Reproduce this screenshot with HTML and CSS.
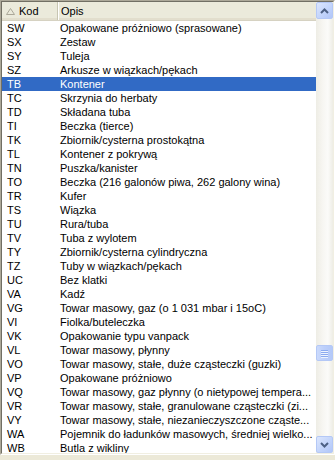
FILE: index.html
```html
<!DOCTYPE html>
<html lang="pl">
<head>
    <meta charset="utf-8">
    <title>Kody opakowań</title>
    <link rel="stylesheet" href="styles.css">
</head>
<body>
<div class="frame">
    <div class="listview">
        <div class="main">
            <div class="header">
                <div class="col-head kod">
                    <svg class="sort" width="9" height="7" viewBox="0 0 9 7"><path d="M0.5 6.5 L4.5 0.5 L8.5 6.5 Z" fill="none" stroke="#aca899" stroke-width="1"/></svg>
                    Kod
                </div>
                <div class="col-head opis">Opis</div>
                <div class="col-head rest"></div>
            </div>
            <div class="rows" id="rows"></div>
        </div>
        <div class="scrollbar">
            <div class="arrow up">
                <svg width="9" height="6" viewBox="0 0 9 6"><path d="M1 5 L4.5 1.5 L8 5" fill="none" stroke="#4d6185" stroke-width="2"/></svg>
            </div>
            <div class="track">
                <div class="thumb">
                    <span></span><span></span><span></span><span></span>
                </div>
            </div>
            <div class="arrow down">
                <svg width="9" height="6" viewBox="0 0 9 6"><path d="M1 1 L4.5 4.5 L8 1" fill="none" stroke="#4d6185" stroke-width="2"/></svg>
            </div>
        </div>
    </div>
</div>
<script>
    const items = [
        ["SW", "Opakowane próżniowo (sprasowane)"],
        ["SX", "Zestaw"],
        ["SY", "Tuleja"],
        ["SZ", "Arkusze w wiązkach/pękach"],
        ["TB", "Kontener"],
        ["TC", "Skrzynia do herbaty"],
        ["TD", "Składana tuba"],
        ["TI", "Beczka (tierce)"],
        ["TK", "Zbiornik/cysterna prostokątna"],
        ["TL", "Kontener z pokrywą"],
        ["TN", "Puszka/kanister"],
        ["TO", "Beczka (216 galonów piwa, 262 galony wina)"],
        ["TR", "Kufer"],
        ["TS", "Wiązka"],
        ["TU", "Rura/tuba"],
        ["TV", "Tuba z wylotem"],
        ["TY", "Zbiornik/cysterna cylindryczna"],
        ["TZ", "Tuby w wiązkach/pękach"],
        ["UC", "Bez klatki"],
        ["VA", "Kadź"],
        ["VG", "Towar masowy, gaz (o 1 031 mbar i 15oC)"],
        ["VI", "Fiolka/buteleczka"],
        ["VK", "Opakowanie typu vanpack"],
        ["VL", "Towar masowy, płynny"],
        ["VO", "Towar masowy, stałe, duże cząsteczki (guzki)"],
        ["VP", "Opakowane próżniowo"],
        ["VQ", "Towar masowy, gaz płynny (o nietypowej tempera..."],
        ["VR", "Towar masowy, stałe, granulowane cząsteczki (zi..."],
        ["VY", "Towar masowy, stałe, niezanieczyszczone cząste..."],
        ["WA", "Pojemnik do ładunków masowych, średniej wielko..."],
        ["WB", "Butla z wikliny"]
    ];

    let rows = document.getElementById("rows");
    items.forEach(item => {
        let row = document.createElement("div");
        row.className = "row" + (item[0] == "TB" ? " selected" : "");
        row.innerHTML = `<div class="cell kod">${item[0]}</div><div class="cell opis">${item[1]}</div>`;
        rows.appendChild(row);
    });
</script>
</body>
</html>
```

FILE: styles.css
```css
html, body {
    margin: 0;
    padding: 0;
    background: #ece9d8;
}

body {
    width: 335px;
    height: 460px;
    overflow: hidden;
    font-family: "Liberation Sans", Arial, sans-serif;
    font-size: 11px;
    color: #000;
}

.frame {
    height: 455px;
    box-sizing: border-box;
    border-top: 1px solid #aca899;
    border-left: 1px solid #aca899;
    border-right: 1px solid #fff;
    border-bottom: 1px solid #fff;
}

.listview {
    height: 100%;
    box-sizing: border-box;
    border-top: 1px solid #716f64;
    border-left: 1px solid #716f64;
    border-right: 1px solid #f1efe2;
    border-bottom: 1px solid #f1efe2;
    background: #fff;
    display: flex;
    overflow: hidden;
}

.main {
    flex: 1;
    min-width: 0;
    display: flex;
    flex-direction: column;
}

.header {
    height: 19px;
    flex: none;
    display: flex;
    background: #ebeadb;
    box-sizing: border-box;
    border-bottom: 1px solid #d6d2c2;
    box-shadow: inset 0 -2px 0 #e2decd;
}

.col-head {
    display: flex;
    align-items: center;
    box-sizing: border-box;
    height: 100%;
    white-space: nowrap;
}

.col-head.kod {
    width: 56px;
    border-right: 1px solid #c7c5b2;
    box-shadow: 1px 0 0 #fff;
    padding-left: 4px;
}

.sort {
    margin-right: 4px;
}

.col-head.opis {
    padding-left: 3px;
    width: 250px;
}

.rows {
    flex: 1;
    overflow: hidden;
}

.row {
    height: 14px;
    display: flex;
    align-items: center;
    white-space: nowrap;
}

.row.selected {
    background: #316ac5;
    color: #fff;
}

.cell.kod {
    width: 56px;
    padding-left: 5px;
    box-sizing: border-box;
}

.cell.opis {
    padding-left: 2px;
}

.scrollbar {
    width: 17px;
    flex: none;
    display: flex;
    flex-direction: column;
    background: #f4f3ee;
    background-image: linear-gradient(to right, #eeede5, #f7f6f2 40%, #fbfbf9 70%, #eeede5);
}

.arrow {
    height: 17px;
    flex: none;
    box-sizing: border-box;
    border: 1px solid #b4c8f6;
    border-radius: 2px;
    background: linear-gradient(135deg, #dce6fd, #c1d3fb 60%, #b1c6f8);
    display: flex;
    align-items: center;
    justify-content: center;
}

.track {
    flex: 1;
    position: relative;
}

.thumb {
    position: absolute;
    left: 0;
    right: 0;
    top: 326px;
    height: 16px;
    box-sizing: border-box;
    border: 1px solid #b4c8f6;
    border-radius: 2px;
    background: linear-gradient(to right, #cbdafc, #bccffb 50%, #b4c9f8);
    display: flex;
    flex-direction: column;
    align-items: center;
    justify-content: center;
    gap: 1px;
}

.thumb span {
    width: 7px;
    height: 1px;
    background: #8caaf0;
    box-shadow: 0 1px 0 #eef4fe;
}
```
